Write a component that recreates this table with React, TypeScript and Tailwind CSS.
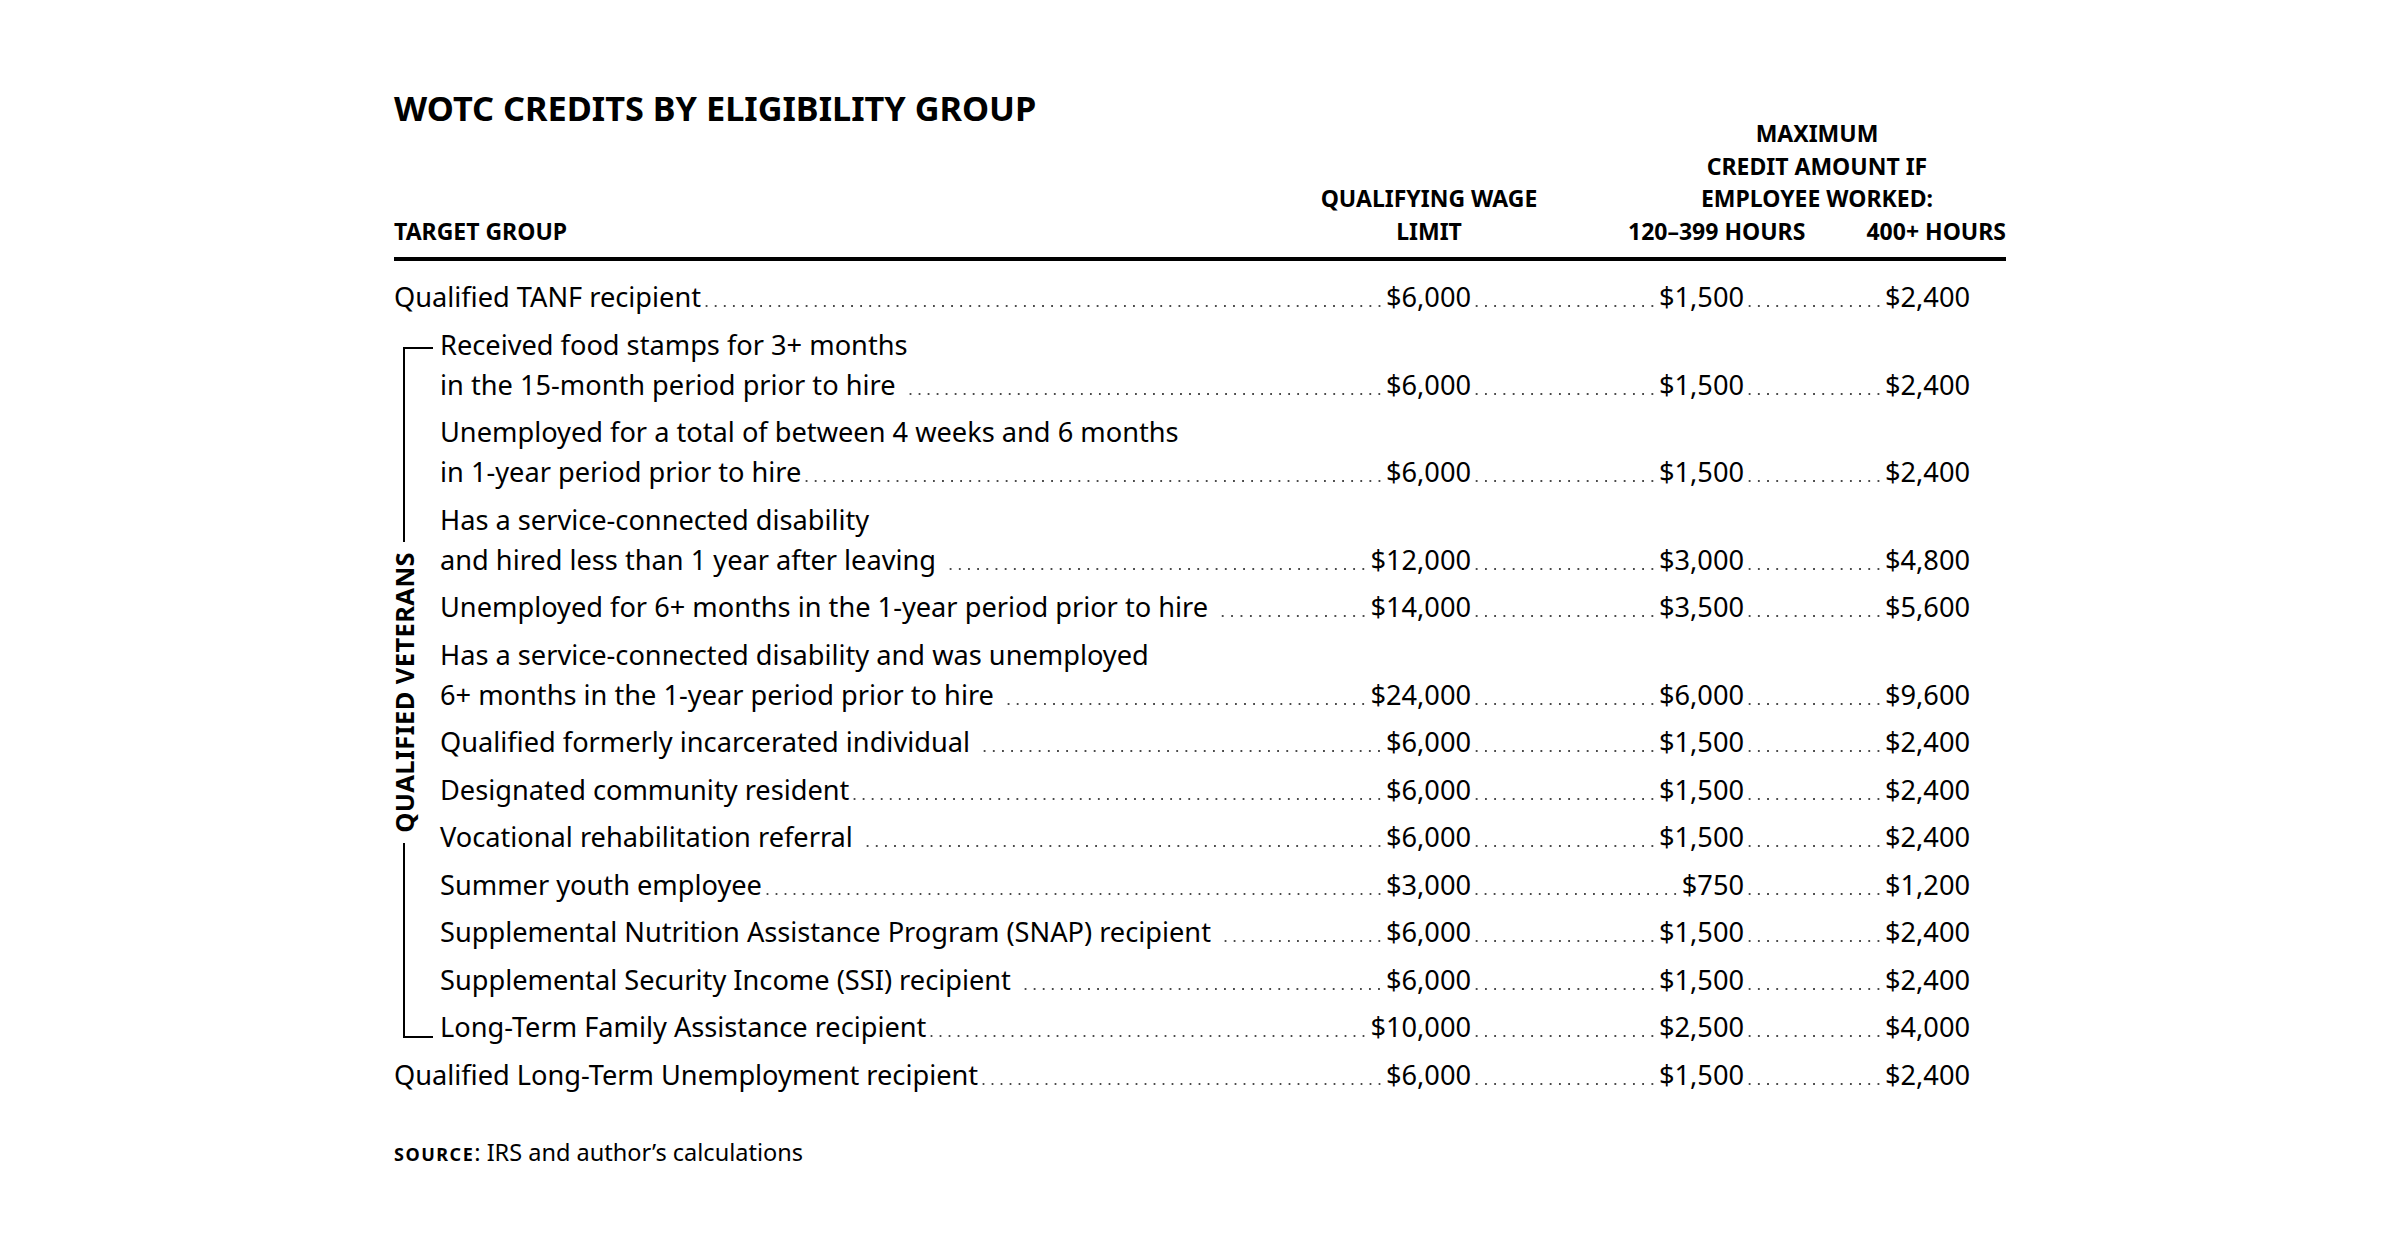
type Row = {
  lines: string[];
  wage: string;
  c1: string;
  c2: string;
  sp?: boolean;
};

const TOP_FIRST: Row = { lines: ['Qualified TANF recipient'], wage: '$6,000', c1: '$1,500', c2: '$2,400' };

const GROUP: Row[] = [
  { lines: ['Received food stamps for 3+ months', 'in the 15-month period prior to hire'], wage: '$6,000', c1: '$1,500', c2: '$2,400', sp: true },
  { lines: ['Unemployed for a total of between 4 weeks and 6 months', 'in 1-year period prior to hire'], wage: '$6,000', c1: '$1,500', c2: '$2,400' },
  { lines: ['Has a service-connected disability', 'and hired less than 1 year after leaving'], wage: '$12,000', c1: '$3,000', c2: '$4,800', sp: true },
  { lines: ['Unemployed for 6+ months in the 1-year period prior to hire'], wage: '$14,000', c1: '$3,500', c2: '$5,600', sp: true },
  { lines: ['Has a service-connected disability and was unemployed', '6+ months in the 1-year period prior to hire'], wage: '$24,000', c1: '$6,000', c2: '$9,600', sp: true },
  { lines: ['Qualified formerly incarcerated individual'], wage: '$6,000', c1: '$1,500', c2: '$2,400', sp: true },
  { lines: ['Designated community resident'], wage: '$6,000', c1: '$1,500', c2: '$2,400' },
  { lines: ['Vocational rehabilitation referral'], wage: '$6,000', c1: '$1,500', c2: '$2,400', sp: true },
  { lines: ['Summer youth employee'], wage: '$3,000', c1: '$750', c2: '$1,200' },
  { lines: ['Supplemental Nutrition Assistance Program (SNAP) recipient'], wage: '$6,000', c1: '$1,500', c2: '$2,400', sp: true },
  { lines: ['Supplemental Security Income (SSI) recipient'], wage: '$6,000', c1: '$1,500', c2: '$2,400', sp: true },
  { lines: ['Long-Term Family Assistance recipient'], wage: '$10,000', c1: '$2,500', c2: '$4,000' },
];

const TOP_LAST: Row = { lines: ['Qualified Long-Term Unemployment recipient'], wage: '$6,000', c1: '$1,500', c2: '$2,400' };

// dotted leader, dots sit on the text baseline and touch both ends
function Leader({ wide }: { wide?: boolean }) {
  return (
    <div
      className={`flex-1 h-[40px] mr-[2px] bg-[image:radial-gradient(circle,#4a4a4a_0.8px,transparent_1.3px)] bg-[length:9px_4px] [background-repeat:space_no-repeat] bg-[position:0_27px] ${wide ? 'ml-[10px]' : 'ml-[1px]'}`}
    />
  );
}

function TableRow({ row }: { row: Row }) {
  const last = row.lines[row.lines.length - 1];
  return (
    <div className="flex items-end py-[3.75px] leading-[40px]">
      <div className="flex-1 min-w-0 flex flex-col">
        {row.lines.slice(0, -1).map(l => (
          <div key={l} className="whitespace-nowrap">{l}</div>
        ))}
        <div className="flex">
          <span className="whitespace-nowrap">{last}</span>
          <Leader wide={row.sp} />
        </div>
      </div>
      <span className="whitespace-nowrap">{row.wage}</span>
      <div className="w-[273px] flex">
        <Leader />
        <span>{row.c1}</span>
      </div>
      <div className="w-[226px] flex">
        <Leader />
        <span>{row.c2}</span>
      </div>
      <div className="w-[36px]" />
    </div>
  );
}

export default function App() {
  return (
    <div className="min-h-screen bg-white text-black font-['Noto_Sans',sans-serif]">
      <div className="w-[1612px] mx-auto pt-[91px]">
        {/* header */}
        <div className="flex items-end font-bold text-[23px] leading-[32.5px]">
          <div className="flex-1 flex flex-col">
            <h1 className="text-[34.3px] leading-[34px] font-bold">WOTC CREDITS BY ELIGIBILITY GROUP</h1>
            <div className="mt-[89.8px]">TARGET GROUP</div>
          </div>
          <div className="w-[398px] text-center">
            <div>QUALIFYING WAGE</div>
            <div>LIMIT</div>
          </div>
          <div className="w-[378px] text-center">
            <div>MAXIMUM</div>
            <div>CREDIT AMOUNT IF</div>
            <div>EMPLOYEE WORKED:</div>
            <div className="flex justify-between">
              <span>120–399 HOURS</span>
              <span>400+ HOURS</span>
            </div>
          </div>
        </div>
        <div className="mt-[9.7px] h-[4px] bg-black" />

        {/* body */}
        <div className="mt-[12.75px] text-[27.2px]">
          <TableRow row={TOP_FIRST} />
          <div className="flex">
            <div className="w-[46px] shrink-0 flex flex-col pt-[25.75px] pb-[13.25px]">
              <div className="ml-[9px] w-[30px] flex-1 border-l-2 border-t-2 border-black" />
              <div className="py-[10px] flex">
                <span className="[writing-mode:vertical-rl] rotate-180 text-[25.5px] leading-[20px] tracking-[0.4px] font-bold whitespace-nowrap">
                  QUALIFIED VETERANS
                </span>
              </div>
              <div className="ml-[9px] w-[30px] flex-1 border-l-2 border-b-2 border-black" />
            </div>
            <div className="flex-1 min-w-0">
              {GROUP.map(r => (
                <TableRow key={r.lines[0]} row={r} />
              ))}
            </div>
          </div>
          <TableRow row={TOP_LAST} />
        </div>

        {/* source */}
        <div className="mt-[38px] text-[23.5px] leading-[30px]">
          <span className="font-bold text-[18px] tracking-[1.5px]">SOURCE</span>
          <span>: IRS and author’s calculations</span>
        </div>
      </div>
    </div>
  );
}
